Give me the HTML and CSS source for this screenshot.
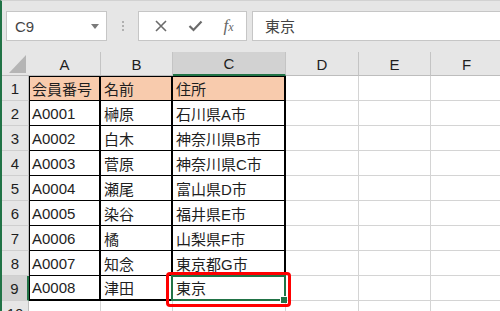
FILE: index.html
```html
<!DOCTYPE html>
<html lang="ja">
<head>
  <meta charset="UTF-8" />
  <title>会員名簿</title>
  <link rel="stylesheet" href="styles.css">
</head>
<body>

<div class="toolbar">
  <div class="namebox">
    <span>C9</span>
    <span class="caret"></span>
  </div>
  <div class="grip"><i></i><i></i><i></i></div>
  <div class="fbuttons">
    <svg class="ico" width="12" height="12" viewBox="0 0 12 12">
      <path d="M1 1 L11 11 M11 1 L1 11" stroke="#6b6b6b" stroke-width="1.6" fill="none"/>
    </svg>
    <svg class="ico" width="15" height="12" viewBox="0 0 15 12">
      <path d="M1.5 6 L5.5 10 L13.5 1.5" stroke="#6b6b6b" stroke-width="2.2" fill="none"/>
    </svg>
    <span class="fx">f<small>x</small></span>
  </div>
  <div class="formula">東京</div>
</div>

<div class="sheet">
  <div class="row head">
    <div class="corner"></div>
    <div class="ch">A</div>
    <div class="ch">B</div>
    <div class="ch sel">C</div>
    <div class="ch">D</div>
    <div class="ch">E</div>
    <div class="ch">F</div>
  </div>

  <div class="row first">
    <div class="rh">1</div>
    <div class="c t a hd">会員番号</div>
    <div class="c t hd">名前</div>
    <div class="c t hd">住所</div>
    <div class="c"></div><div class="c"></div><div class="c"></div>
  </div>
  <div class="row">
    <div class="rh">2</div>
    <div class="c t a">A0001</div>
    <div class="c t">榊原</div>
    <div class="c t">石川県A市</div>
    <div class="c"></div><div class="c"></div><div class="c"></div>
  </div>
  <div class="row">
    <div class="rh">3</div>
    <div class="c t a">A0002</div>
    <div class="c t">白木</div>
    <div class="c t">神奈川県B市</div>
    <div class="c"></div><div class="c"></div><div class="c"></div>
  </div>
  <div class="row">
    <div class="rh">4</div>
    <div class="c t a">A0003</div>
    <div class="c t">菅原</div>
    <div class="c t">神奈川県C市</div>
    <div class="c"></div><div class="c"></div><div class="c"></div>
  </div>
  <div class="row">
    <div class="rh">5</div>
    <div class="c t a">A0004</div>
    <div class="c t">瀬尾</div>
    <div class="c t">富山県D市</div>
    <div class="c"></div><div class="c"></div><div class="c"></div>
  </div>
  <div class="row">
    <div class="rh">6</div>
    <div class="c t a">A0005</div>
    <div class="c t">染谷</div>
    <div class="c t">福井県E市</div>
    <div class="c"></div><div class="c"></div><div class="c"></div>
  </div>
  <div class="row">
    <div class="rh">7</div>
    <div class="c t a">A0006</div>
    <div class="c t">橘</div>
    <div class="c t">山梨県F市</div>
    <div class="c"></div><div class="c"></div><div class="c"></div>
  </div>
  <div class="row">
    <div class="rh">8</div>
    <div class="c t a">A0007</div>
    <div class="c t">知念</div>
    <div class="c t">東京都G市</div>
    <div class="c"></div><div class="c"></div><div class="c"></div>
  </div>
  <div class="row last">
    <div class="rh sel">9</div>
    <div class="c t a">A0008</div>
    <div class="c t">津田</div>
    <div class="c t active">東京<span class="mark"></span></div>
    <div class="c"></div><div class="c"></div><div class="c"></div>
  </div>
  <div class="row">
    <div class="rh">10</div>
    <div class="c"></div><div class="c"></div><div class="c"></div>
    <div class="c"></div><div class="c"></div><div class="c"></div>
  </div>
</div>

</body>
</html>
```

FILE: styles.css
```css
* {
  box-sizing: border-box;
}

html, body {
  margin: 0;
  padding: 0;
}

body {
  width: 500px;
  height: 311px;
  overflow: hidden;
  background: #e6e6e6;
  border-left: 2px solid #217346;
  border-top: 1px solid #d2d2d2;
  font-family: "Liberation Sans", "Noto Sans CJK JP", sans-serif;
  font-size: 15px;
  color: #1e1e1e;
}

/* formula bar */
.toolbar {
  display: flex;
  align-items: flex-start;
  height: 51px;
  padding: 10px 0 0 4px;
}

.namebox {
  display: flex;
  align-items: center;
  justify-content: space-between;
  width: 101px;
  height: 30px;
  padding: 0 7px 0 8px;
  background: #fff;
  border: 1px solid #c6c6c6;
  color: #444;
  font-size: 15px;
}

.caret {
  width: 0;
  height: 0;
  border-left: 4px solid transparent;
  border-right: 4px solid transparent;
  border-top: 5px solid #7a7a7a;
}

.grip {
  width: 31px;
  height: 30px;
  display: flex;
  flex-direction: column;
  align-items: center;
  justify-content: center;
  gap: 2px;
}

.grip i {
  width: 2px;
  height: 2px;
  background: #b0b0b0;
}

.fbuttons {
  display: flex;
  align-items: center;
  justify-content: space-around;
  width: 109px;
  height: 30px;
  padding: 0 2px 0 6px;
  background: #fff;
  border: 1px solid #c6c6c6;
}

.fx {
  font-family: "Liberation Serif", serif;
  font-style: italic;
  font-size: 17px;
  color: #666;
}

.fx small {
  font-size: 12px;
}

.formula {
  flex: 1;
  height: 30px;
  margin: 0 -10px 0 5px;
  padding: 0 12px;
  background: #fff;
  border: 1px solid #c6c6c6;
  color: #444;
  font-family: "Noto Sans CJK JP", sans-serif;
  font-size: 15px;
  line-height: 28px;
}

/* grid */
.sheet {
  background: #fff;
}

.row {
  display: grid;
  grid-template-columns: 27px 72px 72px 113px 73px 72px 72px;
  height: 25px;
}

.row.head {
  height: 24px;
  background: #e6e6e6;
}

.corner {
  position: relative;
  border-bottom: 1px solid #bdbdbd;
}

.corner::after {
  content: "";
  position: absolute;
  right: 3px;
  bottom: 2px;
  border-left: 17px solid transparent;
  border-bottom: 18px solid #b5b5b5;
}

.ch {
  display: flex;
  align-items: center;
  justify-content: center;
  border-right: 1px solid #c4c4c4;
  border-bottom: 1px solid #bdbdbd;
  padding-top: 1px;
}

.ch.sel {
  background: #d2d2d2;
  border-bottom: 2px solid #217346;
}

.rh {
  display: flex;
  align-items: center;
  justify-content: center;
  background: #e6e6e6;
  border-bottom: 1px solid #cfcfcf;
  border-right: 1px solid #bdbdbd;
}

.rh.sel {
  background: #d2d2d2;
  border-right: 2px solid #217346;
}

.c {
  display: flex;
  align-items: center;
  padding-left: 3px;
  border-right: 1px solid #d4d4d4;
  border-bottom: 1px solid #d4d4d4;
  white-space: nowrap;
}

.c.t {
  border-right: 2px solid #000;
  border-bottom: 1px solid #000;
}

.c.a {
  border-left: 1px solid #000;
  padding-left: 2px;
}

.first .c.t {
  border-top: 1px solid #000;
}

.c.hd {
  background: #f8cbad;
}

.last .c.t {
  border-bottom: 2px solid #000;
}

.active {
  position: relative;
}

.active::before {
  content: "";
  position: absolute;
  left: -2px;
  top: -1px;
  right: -2px;
  bottom: -2px;
  border: 2px solid #217346;
}

.active::after {
  content: "";
  position: absolute;
  right: -3px;
  bottom: -4px;
  width: 6px;
  height: 6px;
  background: #217346;
  border-left: 1px solid #fff;
  border-top: 1px solid #fff;
}

.mark {
  position: absolute;
  left: -7px;
  top: -4px;
  right: -7px;
  bottom: -8px;
  border: 3px solid #ff0000;
  border-radius: 4px;
}
```
